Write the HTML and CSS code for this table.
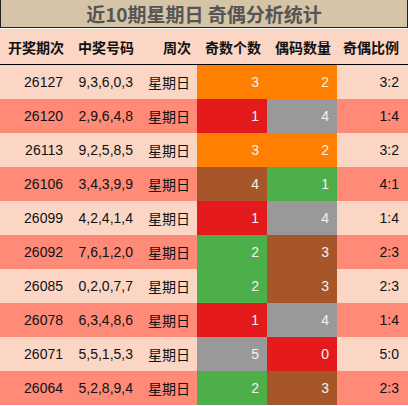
FILE: index.html
```html
<!DOCTYPE html>
<html>
<head>
<meta charset="utf-8">
<link rel="stylesheet" href="styles.css">
</head>
<body>
<div class="title">近10期星期日 奇偶分析统计</div>
<div class="grid">
  <div class="h">开奖期次</div><div class="h">中奖号码</div><div class="h">周次</div><div class="h">奇数个数</div><div class="h">偶码数量</div><div class="h r">奇偶比例</div>
  <div class="sep"></div>

  <div class="c a">26127</div><div class="c a">9,3,6,0,3</div><div class="c a">星期日</div><div class="c v or">3</div><div class="c v or">2</div><div class="c a r">3:2</div>
  <div class="c b">26120</div><div class="c b">2,9,6,4,8</div><div class="c b">星期日</div><div class="c v rd">1</div><div class="c v gy">4</div><div class="c b r">1:4</div>
  <div class="c a">26113</div><div class="c a">9,2,5,8,5</div><div class="c a">星期日</div><div class="c v or">3</div><div class="c v or">2</div><div class="c a r">3:2</div>
  <div class="c b">26106</div><div class="c b">3,4,3,9,9</div><div class="c b">星期日</div><div class="c v br">4</div><div class="c v gr">1</div><div class="c b r">4:1</div>
  <div class="c a">26099</div><div class="c a">4,2,4,1,4</div><div class="c a">星期日</div><div class="c v rd">1</div><div class="c v gy">4</div><div class="c a r">1:4</div>
  <div class="c b">26092</div><div class="c b">7,6,1,2,0</div><div class="c b">星期日</div><div class="c v gr">2</div><div class="c v br">3</div><div class="c b r">2:3</div>
  <div class="c a">26085</div><div class="c a">0,2,0,7,7</div><div class="c a">星期日</div><div class="c v gr">2</div><div class="c v br">3</div><div class="c a r">2:3</div>
  <div class="c b">26078</div><div class="c b">6,3,4,8,6</div><div class="c b">星期日</div><div class="c v rd">1</div><div class="c v gy">4</div><div class="c b r">1:4</div>
  <div class="c a">26071</div><div class="c a">5,5,1,5,3</div><div class="c a">星期日</div><div class="c v gy">5</div><div class="c v rd">0</div><div class="c a r">5:0</div>
  <div class="c b">26064</div><div class="c b">5,2,8,9,4</div><div class="c b">星期日</div><div class="c v gr">2</div><div class="c v br">3</div><div class="c b r">2:3</div>
</div>
</body>
</html>
```
FILE: styles.css
```css
html, body {
  margin: 0;
  padding: 0;
  background: #ffffff;
}
body {
  width: 408px;
  height: 406px;
  overflow: hidden;
  font-family: "Liberation Sans", "Noto Sans CJK SC", sans-serif;
}
.title {
  box-sizing: border-box;
  height: 28px;
  border: 1px solid #222;
  border-top: none;
  background: #d6c4a7;
  color: #555555;
  font-family: "Noto Sans CJK SC", sans-serif;
  font-weight: bold;
  font-size: 19px;
  line-height: 27px;
  text-align: center;
  margin-bottom: 1px;
}
.grid {
  display: grid;
  grid-template-columns: 70px 70px 57px 70px 70px 71px;
  grid-auto-rows: 34px;
  grid-template-rows: 35px 1px;
}
.h {
  background: #fcd6c4;
  font-family: "Noto Sans CJK SC", sans-serif;
  font-weight: bold;
  font-size: 14px;
  color: #111;
  display: flex;
  align-items: center;
  justify-content: flex-end;
  padding-right: 6px;
}
.sep {
  grid-column: 1 / -1;
  background: #000;
}
.c {
  display: flex;
  align-items: center;
  justify-content: flex-end;
  padding-right: 7px;
  font-size: 14px;
  color: #111;
}
.a { background: #fcd6c4; }
.b { background: #ff8a78; }
.v { color: #f2f2f2; padding-right: 8px; }
.or { background: #ff7f00; }
.rd { background: #e41a1c; }
.gy { background: #999999; }
.gr { background: #4daf4a; }
.br { background: #a65628; }
.h.r, .c.r { padding-right: 9px; }
```
